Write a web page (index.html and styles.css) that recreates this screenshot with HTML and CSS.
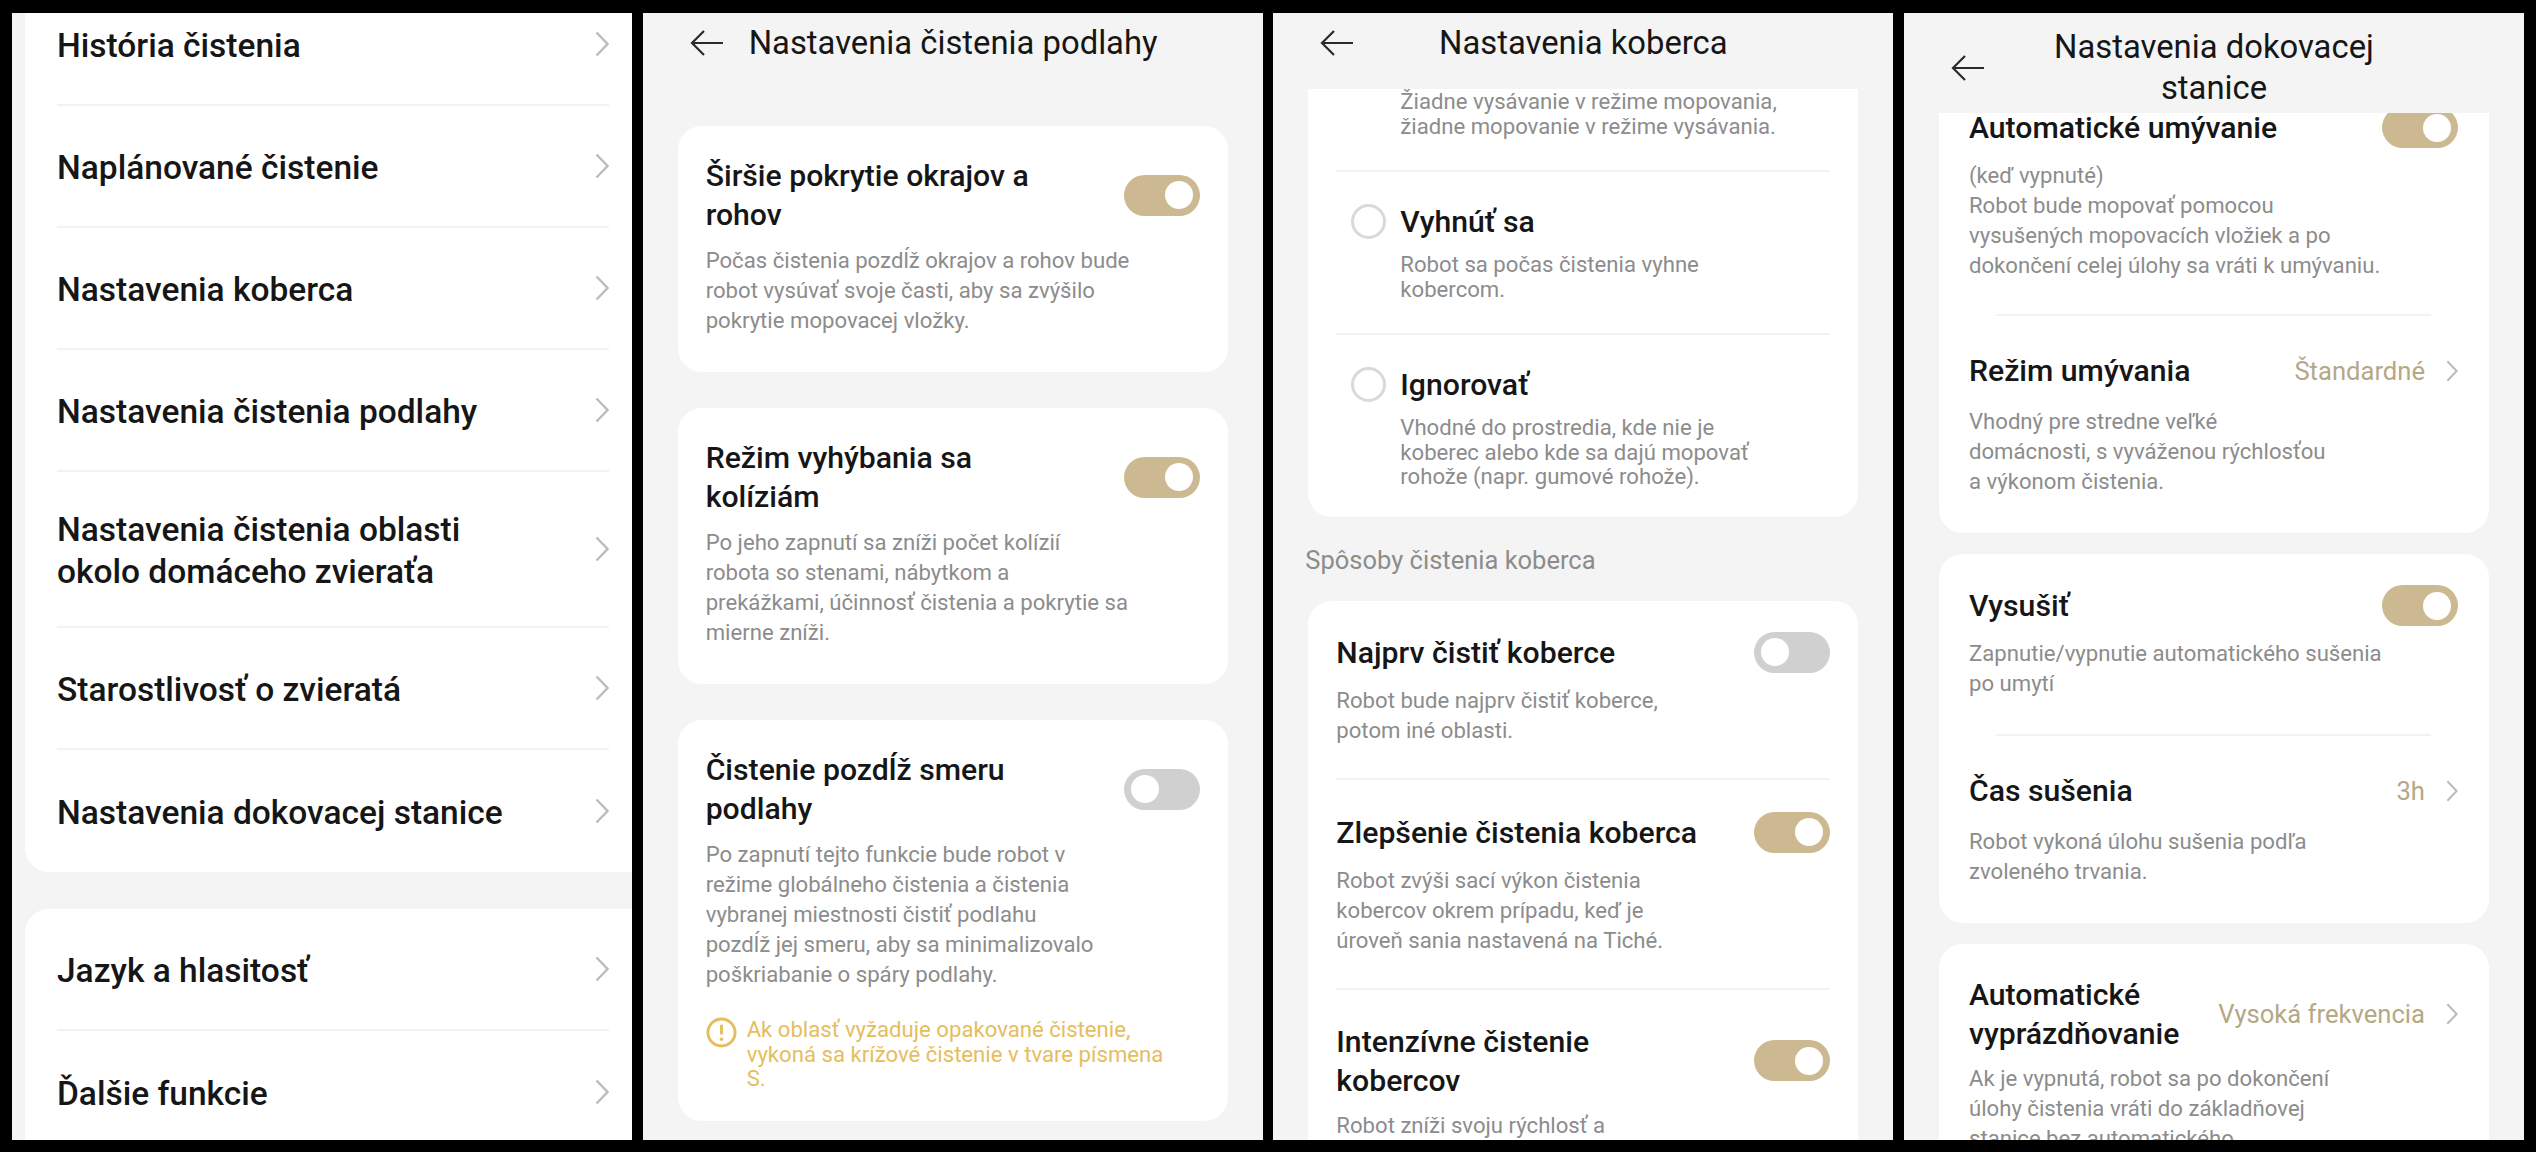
FILE: index.html
```html
<!DOCTYPE html>
<html lang="sk">
<head>
    <meta charset="UTF-8">
    <title>Nastavenia robota</title>
    <link rel="stylesheet" href="styles.css">
</head>
<body>
    <div class="screens">

        <!-- Menu -->
        <section class="panel panel-menu">
            <div class="scroll">
                <div class="menu-card">
                    <div class="menu-row"><span>História čistenia</span><svg class="chevron" viewBox="0 0 14 26"><path d="M1.5 1.5 12.5 13 1.5 24.5"/></svg></div>
                    <div class="menu-row"><span>Naplánované čistenie</span><svg class="chevron" viewBox="0 0 14 26"><path d="M1.5 1.5 12.5 13 1.5 24.5"/></svg></div>
                    <div class="menu-row"><span>Nastavenia koberca</span><svg class="chevron" viewBox="0 0 14 26"><path d="M1.5 1.5 12.5 13 1.5 24.5"/></svg></div>
                    <div class="menu-row"><span>Nastavenia čistenia podlahy</span><svg class="chevron" viewBox="0 0 14 26"><path d="M1.5 1.5 12.5 13 1.5 24.5"/></svg></div>
                    <div class="menu-row menu-row-tall"><span>Nastavenia čistenia oblasti<br>okolo domáceho zvieraťa</span><svg class="chevron" viewBox="0 0 14 26"><path d="M1.5 1.5 12.5 13 1.5 24.5"/></svg></div>
                    <div class="menu-row"><span>Starostlivosť o zvieratá</span><svg class="chevron" viewBox="0 0 14 26"><path d="M1.5 1.5 12.5 13 1.5 24.5"/></svg></div>
                    <div class="menu-row"><span>Nastavenia dokovacej stanice</span><svg class="chevron" viewBox="0 0 14 26"><path d="M1.5 1.5 12.5 13 1.5 24.5"/></svg></div>
                </div>
                <div class="menu-card menu-card-second">
                    <div class="menu-row"><span>Jazyk a hlasitosť</span><svg class="chevron" viewBox="0 0 14 26"><path d="M1.5 1.5 12.5 13 1.5 24.5"/></svg></div>
                    <div class="menu-row"><span>Ďalšie funkcie</span><svg class="chevron" viewBox="0 0 14 26"><path d="M1.5 1.5 12.5 13 1.5 24.5"/></svg></div>
                </div>
            </div>
        </section>

        <!-- Nastavenia cistenia podlahy -->
        <section class="panel">
            <header class="head head-left">
                <svg class="back" viewBox="0 0 34 28"><path d="M33 14H2M14 2 2 14l12 12"/></svg>
                <h1>Nastavenia čistenia podlahy</h1>
            </header>
            <div class="scroll scroll-floor">
                <div class="card">
                    <div class="row">
                        <div class="row-top row-top-tight">
                            <h2>Širšie pokrytie okrajov a<br>rohov</h2>
                            <span class="toggle on"></span>
                        </div>
                        <p class="desc">Počas čistenia pozdĺž okrajov a rohov bude<br>robot vysúvať svoje časti, aby sa zvýšilo<br>pokrytie mopovacej vložky.</p>
                    </div>
                </div>
                <div class="card">
                    <div class="row">
                        <div class="row-top row-top-tight">
                            <h2>Režim vyhýbania sa<br>kolíziám</h2>
                            <span class="toggle on"></span>
                        </div>
                        <p class="desc">Po jeho zapnutí sa zníži počet kolízií<br>robota so stenami, nábytkom a<br>prekážkami, účinnosť čistenia a pokrytie sa<br>mierne zníži.</p>
                    </div>
                </div>
                <div class="card">
                    <div class="row">
                        <div class="row-top row-top-tight">
                            <h2>Čistenie pozdĺž smeru<br>podlahy</h2>
                            <span class="toggle"></span>
                        </div>
                        <p class="desc">Po zapnutí tejto funkcie bude robot v<br>režime globálneho čistenia a čistenia<br>vybranej miestnosti čistiť podlahu<br>pozdĺž jej smeru, aby sa minimalizovalo<br>poškriabanie o spáry podlahy.</p>
                        <div class="warning">
                            <svg class="warning-icon" viewBox="0 0 32 32"><circle cx="16" cy="16" r="14"/><path d="M16 8v10"/><circle class="warning-dot" cx="16" cy="23" r="1.8"/></svg>
                            <p>Ak oblasť vyžaduje opakované čistenie,<br>vykoná sa krížové čistenie v tvare písmena<br>S.</p>
                        </div>
                    </div>
                </div>
            </div>
        </section>

        <!-- Nastavenia koberca -->
        <section class="panel">
            <header class="head head-center">
                <svg class="back" viewBox="0 0 34 28"><path d="M33 14H2M14 2 2 14l12 12"/></svg>
                <h1>Nastavenia koberca</h1>
            </header>
            <div class="scroll">
                <div class="card card-cut">
                    <div class="radio-row radio-row-cut">
                        <p class="desc desc-tight">Žiadne vysávanie v režime mopovania,<br>žiadne mopovanie v režime vysávania.</p>
                    </div>
                    <div class="radio-row">
                        <div class="radio-top"><span class="radio"></span><h2>Vyhnúť sa</h2></div>
                        <p class="desc desc-tight">Robot sa počas čistenia vyhne<br>kobercom.</p>
                    </div>
                    <div class="radio-row radio-row-last">
                        <div class="radio-top"><span class="radio"></span><h2>Ignorovať</h2></div>
                        <p class="desc desc-tight">Vhodné do prostredia, kde nie je<br>koberec alebo kde sa dajú mopovať<br>rohože (napr. gumové rohože).</p>
                    </div>
                </div>
                <div class="section-label">Spôsoby čistenia koberca</div>
                <div class="card">
                    <div class="row row-line">
                        <div class="row-top">
                            <h2>Najprv čistiť koberce</h2>
                            <span class="toggle"></span>
                        </div>
                        <p class="desc">Robot bude najprv čistiť koberce,<br>potom iné oblasti.</p>
                    </div>
                    <div class="row row-line">
                        <div class="row-top">
                            <h2>Zlepšenie čistenia koberca</h2>
                            <span class="toggle on"></span>
                        </div>
                        <p class="desc">Robot zvýši sací výkon čistenia<br>kobercov okrem prípadu, keď je<br>úroveň sania nastavená na Tiché.</p>
                    </div>
                    <div class="row">
                        <div class="row-top row-top-tight">
                            <h2>Intenzívne čistenie<br>kobercov</h2>
                            <span class="toggle on"></span>
                        </div>
                        <p class="desc">Robot zníži svoju rýchlosť a</p>
                    </div>
                </div>
            </div>
        </section>

        <!-- Nastavenia dokovacej stanice -->
        <section class="panel panel-dock">
            <header class="head head-center head-tall">
                <svg class="back" viewBox="0 0 34 28"><path d="M33 14H2M14 2 2 14l12 12"/></svg>
                <h1>Nastavenia dokovacej<br>stanice</h1>
            </header>
            <div class="scroll">
                <div class="card card-cut">
                    <div class="row row-line row-cut">
                        <div class="row-top">
                            <h2>Automatické umývanie</h2>
                            <span class="toggle on"></span>
                        </div>
                        <p class="desc">(keď vypnuté)<br>Robot bude mopovať pomocou<br>vysušených mopovacích vložiek a po<br>dokončení celej úlohy sa vráti k umývaniu.</p>
                    </div>
                    <div class="row">
                        <div class="row-top row-value">
                            <h2>Režim umývania</h2>
                            <span class="value">Štandardné</span>
                            <svg class="chevron chevron-small" viewBox="0 0 14 26"><path d="M1.5 1.5 12.5 13 1.5 24.5"/></svg>
                        </div>
                        <p class="desc">Vhodný pre stredne veľké<br>domácnosti, s vyváženou rýchlosťou<br>a výkonom čistenia.</p>
                    </div>
                </div>
                <div class="card">
                    <div class="row row-line">
                        <div class="row-top">
                            <h2>Vysušiť</h2>
                            <span class="toggle on"></span>
                        </div>
                        <p class="desc">Zapnutie/vypnutie automatického sušenia<br>po umytí</p>
                    </div>
                    <div class="row">
                        <div class="row-top row-value">
                            <h2>Čas sušenia</h2>
                            <span class="value">3h</span>
                            <svg class="chevron chevron-small" viewBox="0 0 14 26"><path d="M1.5 1.5 12.5 13 1.5 24.5"/></svg>
                        </div>
                        <p class="desc">Robot vykoná úlohu sušenia podľa<br>zvoleného trvania.</p>
                    </div>
                </div>
                <div class="card">
                    <div class="row">
                        <div class="row-top row-value row-top-tight">
                            <h2>Automatické<br>vyprázdňovanie</h2>
                            <span class="value">Vysoká frekvencia</span>
                            <svg class="chevron chevron-small" viewBox="0 0 14 26"><path d="M1.5 1.5 12.5 13 1.5 24.5"/></svg>
                        </div>
                        <p class="desc">Ak je vypnutá, robot sa po dokončení<br>úlohy čistenia vráti do základňovej<br>stanice bez automatického</p>
                    </div>
                </div>
            </div>
        </section>

    </div>
</body>
</html>
```

FILE: styles.css
```css
:root {
    --panel-bg: #f4f4f4;
    --title-color: #161616;
    --desc-color: #8c8c8c;
    --line-color: #f2f2f2;
    --gold: #cdb991;
    --value-color: #b5a886;
    --warn-color: #e6bd5e;
}

* {
    margin: 0;
    padding: 0;
    box-sizing: border-box;
}

html,
body {
    height: 100%;
}

body {
    background-color: #000;
    font-family: 'Roboto', 'Liberation Sans', sans-serif;
    color: var(--title-color);
    overflow: hidden;
}

.screens {
    display: grid;
    grid-template-columns: repeat(4, 620px);
    justify-content: space-between;
    height: 100%;
    padding: 13px 12px 12px;
}

.panel {
    display: flex;
    flex-direction: column;
    background-color: var(--panel-bg);
    overflow: hidden;
}

.scroll {
    flex: 1;
    overflow: hidden;
}

/* Hlavicka */
.head {
    display: flex;
    align-items: center;
    flex-shrink: 0;
    height: 76px;
    padding-left: 47px;
    padding-bottom: 16px;
}

.head h1 {
    font-size: 32.8px;
    font-weight: 400;
    line-height: 41px;
}

.head-center h1 {
    flex: 1;
    padding-right: 81px;
    text-align: center;
}

.head-left {
    gap: 25px;
}

.head-tall {
    height: 100px;
    padding-top: 10px;
    padding-bottom: 0;
}

.back {
    flex-shrink: 0;
    width: 34px;
    height: 28px;
    fill: none;
    stroke: #2a2a2a;
    stroke-width: 2.2;
}

/* Menu */
.panel-menu .scroll {
    margin-top: -29px;
    padding-left: 13px;
}

.menu-card {
    background-color: #fff;
    border-radius: 0 0 0 24px;
}

.menu-card-second {
    margin-top: 37px;
    border-radius: 24px 0 0 0;
}

.menu-row {
    display: flex;
    align-items: center;
    justify-content: space-between;
    height: 122px;
    margin-left: 32px;
    margin-right: 23px;
    border-bottom: 2px solid var(--line-color);
    font-size: 33.5px;
    font-weight: 500;
    line-height: 42px;
}

.menu-row span {
    padding-top: 3px;
}

.menu-row-tall {
    height: 156px;
}

.menu-row:last-child {
    border-bottom: none;
}

.chevron {
    flex-shrink: 0;
    width: 14px;
    height: 26px;
    fill: none;
    stroke: #bcbcbc;
    stroke-width: 2.4;
}

.chevron-small {
    width: 12px;
    height: 22px;
}

/* Karty */
.card {
    margin: 0 35px 21px;
    background-color: #fff;
    border-radius: 24px;
}

.card-cut {
    border-radius: 0 0 24px 24px;
}

.scroll-floor {
    padding-top: 37px;
}

.scroll-floor .card {
    margin-bottom: 36px;
}

.scroll-floor .row {
    padding-top: 30px;
}

.scroll-floor .row-top-tight {
    margin-bottom: 11px;
}

.row {
    position: relative;
    padding: 31px 28px 37px;
}

.row + .row {
    padding-top: 32px;
}

.row-line {
    padding-bottom: 35px;
}

.row-line::after {
    content: "";
    position: absolute;
    left: 28px;
    right: 28px;
    bottom: 0;
    height: 2px;
    background-color: var(--line-color);
}

.row-top {
    display: flex;
    align-items: center;
    justify-content: space-between;
    margin-bottom: 12px;
}

.row-value {
    justify-content: flex-start;
    margin-bottom: 16px;
}

.row-top-tight {
    margin-bottom: 10px;
}

.row-value .value {
    margin-left: auto;
}

h2 {
    font-size: 30.2px;
    font-weight: 500;
    line-height: 39px;
}

.desc {
    color: var(--desc-color);
    font-size: 22.15px;
    line-height: 30px;
}

.desc-tight {
    line-height: 24.5px;
}

.value {
    color: var(--value-color);
    font-size: 25.6px;
}

.row-value .chevron {
    margin-left: 21px;
}

/* Dokovacia stanica ma mierne ine odsadenie */
.panel-dock .card-cut {
    margin-top: -6px;
}

.panel-dock .row {
    padding-left: 30px;
    padding-right: 31px;
}

.panel-dock .row + .row {
    padding-top: 35px;
}

.panel-dock .row-line {
    padding-bottom: 38px;
}

.panel-dock .row-cut {
    padding-top: 0;
    padding-bottom: 36px;
}

.panel-dock .row-line::after {
    left: 57px;
    right: 58px;
}

/* Prepinac */
.toggle {
    position: relative;
    flex-shrink: 0;
    width: 76px;
    height: 41px;
    background-color: #d0d0d0;
    border-radius: 21px;
}

.toggle::after {
    content: "";
    position: absolute;
    top: 6.5px;
    left: 7px;
    width: 28px;
    height: 28px;
    background-color: #fff;
    border-radius: 50%;
}

.toggle.on {
    background-color: var(--gold);
}

.toggle.on::after {
    left: 41px;
}

/* Varovanie */
.warning {
    display: flex;
    gap: 10px;
    margin-top: 28px;
    margin-bottom: -7px;
    color: var(--warn-color);
    font-size: 22.15px;
    line-height: 24.5px;
}

.warning-icon {
    flex-shrink: 0;
    width: 31px;
    height: 31px;
    fill: none;
    stroke: var(--warn-color);
    stroke-width: 3;
}

.warning-dot {
    fill: var(--warn-color);
    stroke: none;
}

/* Vyber */
.radio-row {
    position: relative;
    padding: 32px 28px;
}

.radio-row .desc {
    margin-left: 64px;
}

.radio-row + .radio-row::before {
    content: "";
    position: absolute;
    top: 0;
    left: 28px;
    right: 28px;
    height: 2px;
    background-color: var(--line-color);
}

.radio-row-cut {
    padding-top: 0;
}

.radio-row-last {
    padding-bottom: 28px;
}

.radio-top {
    display: flex;
    align-items: center;
    gap: 14px;
    margin-left: 15px;
    margin-bottom: 11px;
}

.radio {
    flex-shrink: 0;
    width: 35px;
    height: 35px;
    border: 3px solid #d9d9d9;
    border-radius: 50%;
}

.section-label {
    margin: 26px 35px 24px 32px;
    color: var(--desc-color);
    font-size: 25.5px;
    line-height: 34px;
}
```
